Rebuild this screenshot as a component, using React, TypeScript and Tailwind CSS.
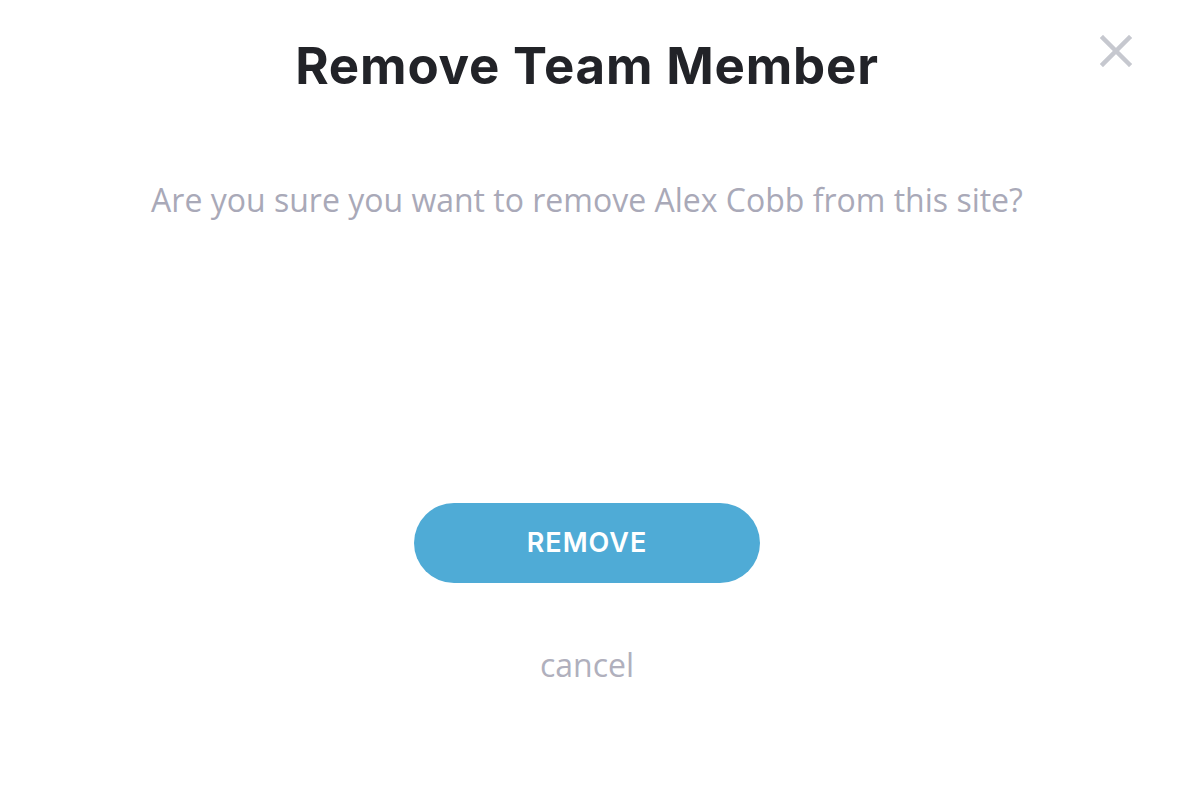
const App = () => {
	return (
		<div className="w-[1186px] h-[790px] bg-white relative font-['Open_Sans',sans-serif]">
			<button className="absolute top-[35px] right-[54px] w-[32px] h-[32px] flex items-center justify-center">
				<svg width="32" height="32" viewBox="0 0 32 32" fill="none">
					<path d="M3 3L29 29M29 3L3 29" stroke="#c6c8cf" strokeWidth="4.5" strokeLinecap="square" />
				</svg>
			</button>
			<div className="flex flex-col items-center pt-[36px] pr-[12px]">
				<h1 className="text-[51px] leading-[60px] font-bold text-[#222328] font-['Inter',sans-serif] tracking-[0.8px]">
					Remove Team Member
				</h1>
				<p className="mt-[82px] text-[32px] leading-[44px] text-[#a9a9b8]">
					Are you sure you want to remove Alex Cobb from this site?
				</p>
				<button className="mt-[281px] w-[346px] h-[80px] rounded-full bg-[#4fabd6] text-white text-[27px] tracking-[1px] font-semibold font-['Inter',sans-serif]">
					REMOVE
				</button>
				<span className="mt-[60px] text-[32px] leading-[44px] text-[#b0b0bd]">cancel</span>
			</div>
		</div>
	);
};
export default App;
